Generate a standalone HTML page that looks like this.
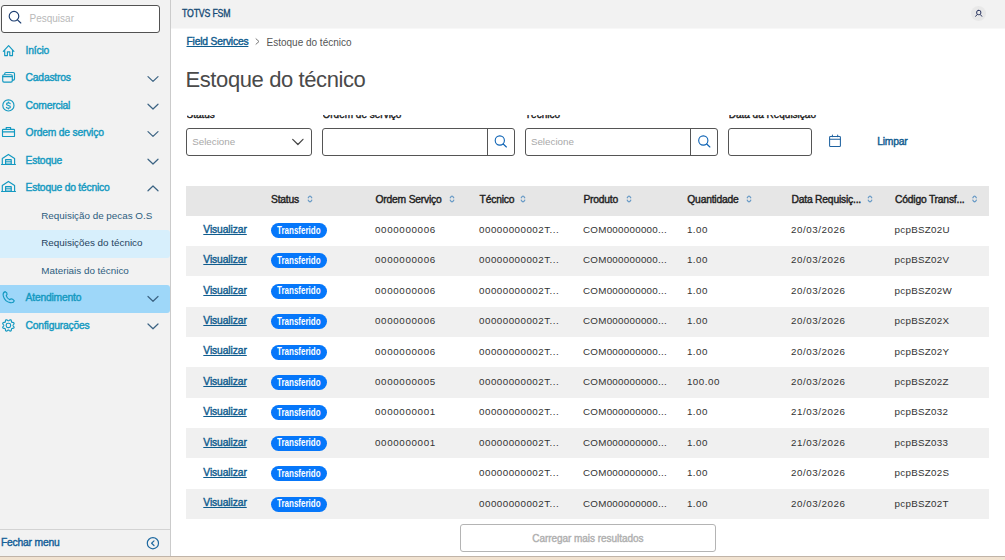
<!DOCTYPE html>
<html><head><meta charset="utf-8"><style>
*{box-sizing:border-box;margin:0;padding:0}
html,body{width:1005px;height:560px;overflow:hidden;background:#fff;font-family:"Liberation Sans",sans-serif}
.a{position:absolute}
.t{position:absolute;white-space:nowrap}
.semi{-webkit-text-stroke:0.4px currentColor;letter-spacing:-0.2px}
.mi{color:#1399c1}
.sub{color:#2d5d7e}
.th{color:#1e1e1e}
.td{color:#333}
.lnk{color:#0f5c8e;text-decoration:underline;text-decoration-thickness:1px;text-underline-offset:0.5px}
.hl{position:absolute;left:0;width:170px;border-radius:0 3px 3px 0}
.inp{position:absolute;top:128px;height:28px;border:1px solid #555;border-radius:3px;background:#fff}
.lblclip{position:absolute;top:115px;height:5px;overflow:hidden;width:200px}
.badge{position:absolute;left:271px;width:56px;height:15px;border-radius:8px;background:#0677fa}
.bt{position:absolute;left:277.3px;font-size:10px;line-height:10px;font-weight:bold;color:#fff;white-space:nowrap;transform:scaleX(0.8);transform-origin:0 0}
</style></head><body>
<div class="a" style="left:0;top:0;width:170px;height:556px;background:#f2f2f2"></div><div class="a" style="left:170px;top:0;width:1px;height:556px;background:#cbcbcb"></div><div class="a" style="left:1px;top:5px;width:159px;height:28px;border:1px solid #525252;border-radius:3px;background:#fff"></div><div class="t " style="left:29.5px;top:13.54px;font-size:10px;line-height:10px;color:#b9b9b9">Pesquisar</div>
<div class="hl" style="top:230px;height:28px;background:#d7effc"></div><div class="hl" style="top:285px;height:28px;background:#9ed7f9"></div><div class="t mi semi" style="left:25.6px;top:46.28px;font-size:10.3px;line-height:10.3px;">Início</div>
<div class="t mi semi" style="left:25.6px;top:73.28px;font-size:10.3px;line-height:10.3px;">Cadastros</div>
<div class="t mi semi" style="left:25.6px;top:101.28px;font-size:10.3px;line-height:10.3px;">Comercial</div>
<div class="t mi semi" style="left:25.6px;top:128.28px;font-size:10.3px;line-height:10.3px;">Ordem de serviço</div>
<div class="t mi semi" style="left:25.6px;top:156.28px;font-size:10.3px;line-height:10.3px;">Estoque</div>
<div class="t mi semi" style="left:25.6px;top:183.28px;font-size:10.3px;line-height:10.3px;">Estoque do técnico</div>
<div class="t sub" style="left:41.25px;top:210.66px;font-size:9.85px;line-height:9.85px;">Requisição de pecas O.S</div>
<div class="t sub" style="left:41.25px;top:238.16px;font-size:9.85px;line-height:9.85px;color:#1f4360;">Requisições do técnico</div>
<div class="t sub" style="left:41.25px;top:265.66px;font-size:9.85px;line-height:9.85px;">Materiais do técnico</div>
<div class="t mi semi" style="left:25.6px;top:293.28px;font-size:10.3px;line-height:10.3px;">Atendimento</div>
<div class="t mi semi" style="left:25.6px;top:321.28px;font-size:10.3px;line-height:10.3px;">Configurações</div>
<div class="a" style="left:0;top:529px;width:170px;height:1px;background:#d3d3d3"></div><div class="t semi" style="left:1.0px;top:538.28px;font-size:10.3px;line-height:10.3px;color:#135f98">Fechar menu</div>
<div class="a" style="left:171px;top:0;width:834px;height:28px;background:#f2f2f2"></div><div class="a" style="left:171px;top:28px;width:834px;height:1px;background:#f8f8f8"></div><div class="t " style="left:182px;top:9.28px;font-size:10.3px;line-height:10.3px;color:#154a75;-webkit-text-stroke:0.35px currentColor;letter-spacing:-0.2px;transform:scaleX(0.85);transform-origin:0 0">TOTVS FSM</div>
<div class="a" style="left:971px;top:6px;width:15px;height:15px;border-radius:50%;background:#e8e8e8"></div><div class="t lnk semi" style="left:186.5px;top:36.98px;font-size:10.3px;line-height:10.3px;text-underline-offset:1.3px">Field Services</div>
<div class="t " style="left:266.5px;top:37.73px;font-size:10px;line-height:10px;color:#555">Estoque do técnico</div>
<div class="t " style="left:185.5px;top:69.38px;font-size:22px;line-height:22px;color:#4a4a4a;letter-spacing:-0.4px">Estoque do técnico</div>
<div class="lblclip" style="left:186.5px"><div class="t" style="left:0;top:-5.06px;font-size:10px;line-height:10px;color:#1e1e1e;-webkit-text-stroke:0.4px currentColor;letter-spacing:0px">Status</div></div><div class="lblclip" style="left:322.5px"><div class="t" style="left:0;top:-5.06px;font-size:10px;line-height:10px;color:#1e1e1e;-webkit-text-stroke:0.4px currentColor;letter-spacing:0px">Ordem de serviço</div></div><div class="lblclip" style="left:525px"><div class="t" style="left:0;top:-5.06px;font-size:10px;line-height:10px;color:#1e1e1e;-webkit-text-stroke:0.4px currentColor;letter-spacing:0px">Técnico</div></div><div class="lblclip" style="left:728.7px"><div class="t" style="left:0;top:-5.06px;font-size:10px;line-height:10px;color:#1e1e1e;-webkit-text-stroke:0.4px currentColor;letter-spacing:0px">Data da Requisição</div></div><div class="inp" style="left:186px;width:126px"></div><div class="t " style="left:192.2px;top:137.2px;font-size:9.8px;line-height:9.8px;color:#a9a9a9">Selecione</div>
<div class="inp" style="left:322px;width:193px"></div><div class="a" style="left:487px;top:128px;width:1px;height:28px;background:#555"></div><div class="inp" style="left:525px;width:193px"></div><div class="a" style="left:690px;top:128px;width:1px;height:28px;background:#555"></div><div class="t " style="left:530.9px;top:137.2px;font-size:9.8px;line-height:9.8px;color:#a9a9a9">Selecione</div>
<div class="inp" style="left:728px;width:84px"></div><div class="t semi" style="left:877.2px;top:137.28px;font-size:10.3px;line-height:10.3px;color:#0f5b8f">Limpar</div>
<div class="a" style="left:186px;top:186px;width:803px;height:30px;background:#e6e6e6"></div><div class="t th semi" style="left:271px;top:195.18px;font-size:10.3px;line-height:10.3px;">Status</div>
<div class="t th semi" style="left:375.5px;top:195.18px;font-size:10.3px;line-height:10.3px;">Ordem Serviço</div>
<div class="t th semi" style="left:479.6px;top:195.18px;font-size:10.3px;line-height:10.3px;">Técnico</div>
<div class="t th semi" style="left:583.4px;top:195.18px;font-size:10.3px;line-height:10.3px;">Produto</div>
<div class="t th semi" style="left:687.3px;top:195.18px;font-size:10.3px;line-height:10.3px;">Quantidade</div>
<div class="t th semi" style="left:791.5px;top:195.18px;font-size:10.3px;line-height:10.3px;">Data Requisiç...</div>
<div class="t th semi" style="left:895px;top:195.18px;font-size:10.3px;line-height:10.3px;">Código Transf...</div>
<div class="t lnk semi" style="left:203.3px;top:224.78px;font-size:10.3px;line-height:10.3px;letter-spacing:-0.1px">Visualizar</div>
<div class="badge" style="top:223.0px"></div><div class="bt" style="top:225.6px">Transferido</div><div class="t td" style="left:375px;top:225.0px;font-size:9.8px;line-height:9.8px;letter-spacing:0.63px">0000000006</div>
<div class="t td" style="left:479.1px;top:225.0px;font-size:9.8px;line-height:9.8px;letter-spacing:0.47px">00000000002T...</div>
<div class="t td" style="left:583px;top:225.0px;font-size:9.8px;line-height:9.8px;letter-spacing:0.26px">COM000000000...</div>
<div class="t td" style="left:686.9px;top:225.0px;font-size:9.8px;line-height:9.8px;letter-spacing:0.5px">1.00</div>
<div class="t td" style="left:791.1px;top:225.0px;font-size:9.8px;line-height:9.8px;letter-spacing:0.54px">20/03/2026</div>
<div class="t td" style="left:894.6px;top:225.0px;font-size:9.8px;line-height:9.8px;letter-spacing:0.28px">pcpBSZ02U</div>
<div class="a" style="left:186px;top:245.96px;width:803px;height:30.36px;background:#f0f0f0"></div><div class="t lnk semi" style="left:203.3px;top:255.19px;font-size:10.3px;line-height:10.3px;letter-spacing:-0.1px">Visualizar</div>
<div class="badge" style="top:253.41px"></div><div class="bt" style="top:256.01px">Transferido</div><div class="t td" style="left:375px;top:255.41px;font-size:9.8px;line-height:9.8px;letter-spacing:0.63px">0000000006</div>
<div class="t td" style="left:479.1px;top:255.41px;font-size:9.8px;line-height:9.8px;letter-spacing:0.47px">00000000002T...</div>
<div class="t td" style="left:583px;top:255.41px;font-size:9.8px;line-height:9.8px;letter-spacing:0.26px">COM000000000...</div>
<div class="t td" style="left:686.9px;top:255.41px;font-size:9.8px;line-height:9.8px;letter-spacing:0.5px">1.00</div>
<div class="t td" style="left:791.1px;top:255.41px;font-size:9.8px;line-height:9.8px;letter-spacing:0.54px">20/03/2026</div>
<div class="t td" style="left:894.6px;top:255.41px;font-size:9.8px;line-height:9.8px;letter-spacing:0.28px">pcpBSZ02V</div>
<div class="t lnk semi" style="left:203.3px;top:285.6px;font-size:10.3px;line-height:10.3px;letter-spacing:-0.1px">Visualizar</div>
<div class="badge" style="top:283.82px"></div><div class="bt" style="top:286.42px">Transferido</div><div class="t td" style="left:375px;top:285.82px;font-size:9.8px;line-height:9.8px;letter-spacing:0.63px">0000000006</div>
<div class="t td" style="left:479.1px;top:285.82px;font-size:9.8px;line-height:9.8px;letter-spacing:0.47px">00000000002T...</div>
<div class="t td" style="left:583px;top:285.82px;font-size:9.8px;line-height:9.8px;letter-spacing:0.26px">COM000000000...</div>
<div class="t td" style="left:686.9px;top:285.82px;font-size:9.8px;line-height:9.8px;letter-spacing:0.5px">1.00</div>
<div class="t td" style="left:791.1px;top:285.82px;font-size:9.8px;line-height:9.8px;letter-spacing:0.54px">20/03/2026</div>
<div class="t td" style="left:894.6px;top:285.82px;font-size:9.8px;line-height:9.8px;letter-spacing:0.28px">pcpBSZ02W</div>
<div class="a" style="left:186px;top:306.68px;width:803px;height:30.36px;background:#f0f0f0"></div><div class="t lnk semi" style="left:203.3px;top:316.01px;font-size:10.3px;line-height:10.3px;letter-spacing:-0.1px">Visualizar</div>
<div class="badge" style="top:314.23px"></div><div class="bt" style="top:316.83px">Transferido</div><div class="t td" style="left:375px;top:316.23px;font-size:9.8px;line-height:9.8px;letter-spacing:0.63px">0000000006</div>
<div class="t td" style="left:479.1px;top:316.23px;font-size:9.8px;line-height:9.8px;letter-spacing:0.47px">00000000002T...</div>
<div class="t td" style="left:583px;top:316.23px;font-size:9.8px;line-height:9.8px;letter-spacing:0.26px">COM000000000...</div>
<div class="t td" style="left:686.9px;top:316.23px;font-size:9.8px;line-height:9.8px;letter-spacing:0.5px">1.00</div>
<div class="t td" style="left:791.1px;top:316.23px;font-size:9.8px;line-height:9.8px;letter-spacing:0.54px">20/03/2026</div>
<div class="t td" style="left:894.6px;top:316.23px;font-size:9.8px;line-height:9.8px;letter-spacing:0.28px">pcpBSZ02X</div>
<div class="t lnk semi" style="left:203.3px;top:346.42px;font-size:10.3px;line-height:10.3px;letter-spacing:-0.1px">Visualizar</div>
<div class="badge" style="top:344.64px"></div><div class="bt" style="top:347.24px">Transferido</div><div class="t td" style="left:375px;top:346.64px;font-size:9.8px;line-height:9.8px;letter-spacing:0.63px">0000000006</div>
<div class="t td" style="left:479.1px;top:346.64px;font-size:9.8px;line-height:9.8px;letter-spacing:0.47px">00000000002T...</div>
<div class="t td" style="left:583px;top:346.64px;font-size:9.8px;line-height:9.8px;letter-spacing:0.26px">COM000000000...</div>
<div class="t td" style="left:686.9px;top:346.64px;font-size:9.8px;line-height:9.8px;letter-spacing:0.5px">1.00</div>
<div class="t td" style="left:791.1px;top:346.64px;font-size:9.8px;line-height:9.8px;letter-spacing:0.54px">20/03/2026</div>
<div class="t td" style="left:894.6px;top:346.64px;font-size:9.8px;line-height:9.8px;letter-spacing:0.28px">pcpBSZ02Y</div>
<div class="a" style="left:186px;top:367.4px;width:803px;height:30.36px;background:#f0f0f0"></div><div class="t lnk semi" style="left:203.3px;top:376.83px;font-size:10.3px;line-height:10.3px;letter-spacing:-0.1px">Visualizar</div>
<div class="badge" style="top:375.05px"></div><div class="bt" style="top:377.65px">Transferido</div><div class="t td" style="left:375px;top:377.05px;font-size:9.8px;line-height:9.8px;letter-spacing:0.63px">0000000005</div>
<div class="t td" style="left:479.1px;top:377.05px;font-size:9.8px;line-height:9.8px;letter-spacing:0.47px">00000000002T...</div>
<div class="t td" style="left:583px;top:377.05px;font-size:9.8px;line-height:9.8px;letter-spacing:0.26px">COM000000000...</div>
<div class="t td" style="left:686.9px;top:377.05px;font-size:9.8px;line-height:9.8px;letter-spacing:0.5px">100.00</div>
<div class="t td" style="left:791.1px;top:377.05px;font-size:9.8px;line-height:9.8px;letter-spacing:0.54px">20/03/2026</div>
<div class="t td" style="left:894.6px;top:377.05px;font-size:9.8px;line-height:9.8px;letter-spacing:0.28px">pcpBSZ02Z</div>
<div class="t lnk semi" style="left:203.3px;top:407.24px;font-size:10.3px;line-height:10.3px;letter-spacing:-0.1px">Visualizar</div>
<div class="badge" style="top:405.46px"></div><div class="bt" style="top:408.06px">Transferido</div><div class="t td" style="left:375px;top:407.46px;font-size:9.8px;line-height:9.8px;letter-spacing:0.63px">0000000001</div>
<div class="t td" style="left:479.1px;top:407.46px;font-size:9.8px;line-height:9.8px;letter-spacing:0.47px">00000000002T...</div>
<div class="t td" style="left:583px;top:407.46px;font-size:9.8px;line-height:9.8px;letter-spacing:0.26px">COM000000000...</div>
<div class="t td" style="left:686.9px;top:407.46px;font-size:9.8px;line-height:9.8px;letter-spacing:0.5px">1.00</div>
<div class="t td" style="left:791.1px;top:407.46px;font-size:9.8px;line-height:9.8px;letter-spacing:0.54px">21/03/2026</div>
<div class="t td" style="left:894.6px;top:407.46px;font-size:9.8px;line-height:9.8px;letter-spacing:0.28px">pcpBSZ032</div>
<div class="a" style="left:186px;top:428.12px;width:803px;height:30.36px;background:#f0f0f0"></div><div class="t lnk semi" style="left:203.3px;top:437.65px;font-size:10.3px;line-height:10.3px;letter-spacing:-0.1px">Visualizar</div>
<div class="badge" style="top:435.87px"></div><div class="bt" style="top:438.47px">Transferido</div><div class="t td" style="left:375px;top:437.87px;font-size:9.8px;line-height:9.8px;letter-spacing:0.63px">0000000001</div>
<div class="t td" style="left:479.1px;top:437.87px;font-size:9.8px;line-height:9.8px;letter-spacing:0.47px">00000000002T...</div>
<div class="t td" style="left:583px;top:437.87px;font-size:9.8px;line-height:9.8px;letter-spacing:0.26px">COM000000000...</div>
<div class="t td" style="left:686.9px;top:437.87px;font-size:9.8px;line-height:9.8px;letter-spacing:0.5px">1.00</div>
<div class="t td" style="left:791.1px;top:437.87px;font-size:9.8px;line-height:9.8px;letter-spacing:0.54px">21/03/2026</div>
<div class="t td" style="left:894.6px;top:437.87px;font-size:9.8px;line-height:9.8px;letter-spacing:0.28px">pcpBSZ033</div>
<div class="t lnk semi" style="left:203.3px;top:468.06px;font-size:10.3px;line-height:10.3px;letter-spacing:-0.1px">Visualizar</div>
<div class="badge" style="top:466.28px"></div><div class="bt" style="top:468.88px">Transferido</div><div class="t td" style="left:479.1px;top:468.28px;font-size:9.8px;line-height:9.8px;letter-spacing:0.47px">00000000002T...</div>
<div class="t td" style="left:583px;top:468.28px;font-size:9.8px;line-height:9.8px;letter-spacing:0.26px">COM000000000...</div>
<div class="t td" style="left:686.9px;top:468.28px;font-size:9.8px;line-height:9.8px;letter-spacing:0.5px">1.00</div>
<div class="t td" style="left:791.1px;top:468.28px;font-size:9.8px;line-height:9.8px;letter-spacing:0.54px">20/03/2026</div>
<div class="t td" style="left:894.6px;top:468.28px;font-size:9.8px;line-height:9.8px;letter-spacing:0.28px">pcpBSZ02S</div>
<div class="a" style="left:186px;top:488.84px;width:803px;height:30.36px;background:#f0f0f0"></div><div class="t lnk semi" style="left:203.3px;top:498.47px;font-size:10.3px;line-height:10.3px;letter-spacing:-0.1px">Visualizar</div>
<div class="badge" style="top:496.69px"></div><div class="bt" style="top:499.29px">Transferido</div><div class="t td" style="left:479.1px;top:498.69px;font-size:9.8px;line-height:9.8px;letter-spacing:0.47px">00000000002T...</div>
<div class="t td" style="left:583px;top:498.69px;font-size:9.8px;line-height:9.8px;letter-spacing:0.26px">COM000000000...</div>
<div class="t td" style="left:686.9px;top:498.69px;font-size:9.8px;line-height:9.8px;letter-spacing:0.5px">1.00</div>
<div class="t td" style="left:791.1px;top:498.69px;font-size:9.8px;line-height:9.8px;letter-spacing:0.54px">20/03/2026</div>
<div class="t td" style="left:894.6px;top:498.69px;font-size:9.8px;line-height:9.8px;letter-spacing:0.28px">pcpBSZ02T</div>
<div class="a" style="left:460px;top:524px;width:256px;height:28px;border:1px solid #b4b4b4;border-radius:3px;background:#fff"></div><div class="t semi" style="left:532.3px;top:533.53px;font-size:10px;line-height:10px;color:#b0b0b0;letter-spacing:-0.05px">Carregar mais resultados</div>
<div class="a" style="left:0;top:556px;width:1005px;height:4px;background:#f1e2d0;border-top:1px solid #c1b4a8"></div><svg class="a" style="left:0;top:0" width="1005" height="560" fill="none" stroke-linecap="round" stroke-linejoin="round">
<circle cx="14" cy="16.2" r="4.8" stroke="#1c3d70" stroke-width="1.15"/>
<path d="M17.5 19.8 L20.8 23" stroke="#1c3d70" stroke-width="1.15"/>
<g stroke="#1399c1" stroke-width="1.15">
<path d="M3.3 51.3 L8.6 45.7 L13.9 51.3 M12.5 50 V55.6 H9.8 V51.8 H7.4 V55.6 H4.7 V50"/>
<rect x="2.7" y="74.7" width="9.6" height="7.4" rx="1.3"/>
<path d="M2.7 76.6 H12.3 M4.7 74.5 V73.8 A1.3 1.3 0 0 1 6 72.5 H13.2 A1.3 1.3 0 0 1 14.5 73.8 V78.8 A1.3 1.3 0 0 1 13.2 80.1 H12.4"/>
<circle cx="8.4" cy="105.4" r="5.6"/>
<path d="M10.2 103.6 C9.8 102.6 6.5 102.5 6.5 104.2 C6.5 105.8 10.4 105.2 10.4 107 C10.4 108.6 7 108.5 6.4 107.4 M8.4 102 V102.8 M8.4 108 V108.8"/>
<rect x="2.5" y="129.3" width="12" height="7.2" rx="0.6"/>
<path d="M6.2 129.2 V127.5 H10.6 V129.2 M2.5 131.8 H14.5"/>
<path d="M2.3 164.5 V158.5 L8.4 154.4 L14.6 158.5 V164.5 M1.5 164.5 H15.5 M5.6 164.3 V159.6 H11.2 V164.3"/><path stroke-width="0.8" d="M5.6 161.4 H11.2 M5.6 163.1 H11.2"/>
<path d="M2.3 191.5 V185.5 L8.4 181.4 L14.6 185.5 V191.5 M1.5 191.5 H15.5 M5.6 191.3 V186.6 H11.2 V191.3"/><path stroke-width="0.8" d="M5.6 188.4 H11.2 M5.6 190.1 H11.2"/>
<path d="M5.2 291.6 C3.3 292.4 2.7 294 3.4 296.3 C4.4 299.6 6.8 301.9 10.2 302.6 C12.3 303 13.8 302.3 14.3 300.9 L12.6 299.2 C11.6 298.6 10.5 298.8 9.7 299.6 C8 299 6.7 297.4 6.2 295.7 C7 295 7.3 293.9 6.8 293 Z"/>
<path d="M13.00 325.40 L13.09 325.71 L13.33 326.05 L13.65 326.44 L13.93 326.88 L14.08 327.33 L14.04 327.73 L13.78 328.05 L13.36 328.26 L12.85 328.37 L12.35 328.43 L11.93 328.50 L11.65 328.65 L11.50 328.93 L11.43 329.35 L11.37 329.85 L11.26 330.36 L11.05 330.78 L10.73 331.04 L10.33 331.08 L9.88 330.93 L9.44 330.65 L9.05 330.33 L8.71 330.09 L8.40 330.00 L8.09 330.09 L7.75 330.33 L7.36 330.65 L6.92 330.93 L6.47 331.08 L6.07 331.04 L5.75 330.78 L5.54 330.36 L5.43 329.85 L5.37 329.35 L5.30 328.93 L5.15 328.65 L4.87 328.50 L4.45 328.43 L3.95 328.37 L3.44 328.26 L3.02 328.05 L2.76 327.73 L2.72 327.33 L2.87 326.88 L3.15 326.44 L3.47 326.05 L3.71 325.71 L3.80 325.40 L3.71 325.09 L3.47 324.75 L3.15 324.36 L2.87 323.92 L2.72 323.47 L2.76 323.07 L3.02 322.75 L3.44 322.54 L3.95 322.43 L4.45 322.37 L4.87 322.30 L5.15 322.15 L5.30 321.87 L5.37 321.45 L5.43 320.95 L5.54 320.44 L5.75 320.02 L6.07 319.76 L6.47 319.72 L6.92 319.87 L7.36 320.15 L7.75 320.47 L8.09 320.71 L8.40 320.80 L8.71 320.71 L9.05 320.47 L9.44 320.15 L9.88 319.87 L10.33 319.72 L10.73 319.76 L11.05 320.02 L11.26 320.44 L11.37 320.95 L11.43 321.45 L11.50 321.87 L11.65 322.15 L11.93 322.30 L12.35 322.37 L12.85 322.43 L13.36 322.54 L13.78 322.75 L14.04 323.07 L14.08 323.47 L13.93 323.92 L13.65 324.36 L13.33 324.75 L13.09 325.09 Z"/>
<rect x="6.2" y="323.2" width="4.4" height="4.4" rx="1.8"/>
</g>
<g stroke="#3b6383" stroke-width="1.2"><path d="M148 76.6 L153 81.4 L158 76.6"/><path d="M148 104.19999999999999 L153 109.0 L158 104.19999999999999"/><path d="M148 131.6 L153 136.4 L158 131.6"/><path d="M148 159.2 L153 164.0 L158 159.2"/><path d="M148 296.5 L153 301.29999999999995 L158 296.5"/><path d="M148 324.0 L153 328.79999999999995 L158 324.0"/><path d="M148 190.8 L153 186 L158 190.8"/></g>
<circle cx="152.9" cy="543.2" r="5.6" stroke="#1d68a0" stroke-width="1.2"/>
<path d="M154 540.9 L151.6 543.2 L154 545.5" stroke="#1d68a0" stroke-width="1.2"/>
<rect x="976.7" y="10.4" width="4.1" height="4.3" rx="1.6" stroke="#2a3560" stroke-width="1"/>
<path d="M975.7 16.3 L976.9 14.8 M981.8 16.3 L980.6 14.8" stroke="#2a3560" stroke-width="1"/>
<path d="M256 38.8 L259 41.5 L256 44.2" stroke="#777" stroke-width="1"/>
<path d="M292.7 139.3 L297.9 144.5 L303 139.3" stroke="#444" stroke-width="1.2"/>
<g stroke="#0c62b4" stroke-width="1.1">
<circle cx="499.8" cy="140.5" r="4.6"/><path d="M503.2 144 L506.4 147"/>
<circle cx="703.3" cy="140.5" r="4.6"/><path d="M706.7 144 L709.9 147"/>
</g>
<g stroke="#1f62a0" stroke-width="1.05">
<rect x="829.6" y="136.4" width="10.8" height="10.1" rx="0.8"/>
<path d="M829.6 139.3 H840.4 M832.4 135 V136.6 M837.7 135 V136.6"/>
</g>
<g stroke="#6a9bc6" stroke-width="1.35"><path d="M308.3 197.7 Q310 194.6 311.7 197.7 M308.3 200.2 Q310 203.3 311.7 200.2"/><path d="M450.3 197.7 Q452 194.6 453.7 197.7 M450.3 200.2 Q452 203.3 453.7 200.2"/><path d="M521.3 197.7 Q523 194.6 524.7 197.7 M521.3 200.2 Q523 203.3 524.7 200.2"/><path d="M627.3 197.7 Q629 194.6 630.7 197.7 M627.3 200.2 Q629 203.3 630.7 200.2"/><path d="M747.3 197.7 Q749 194.6 750.7 197.7 M747.3 200.2 Q749 203.3 750.7 200.2"/><path d="M868.3 197.7 Q870 194.6 871.7 197.7 M868.3 200.2 Q870 203.3 871.7 200.2"/><path d="M972.9 197.7 Q974.6 194.6 976.3000000000001 197.7 M972.9 200.2 Q974.6 203.3 976.3000000000001 200.2"/></g>
</svg>
</body></html>
